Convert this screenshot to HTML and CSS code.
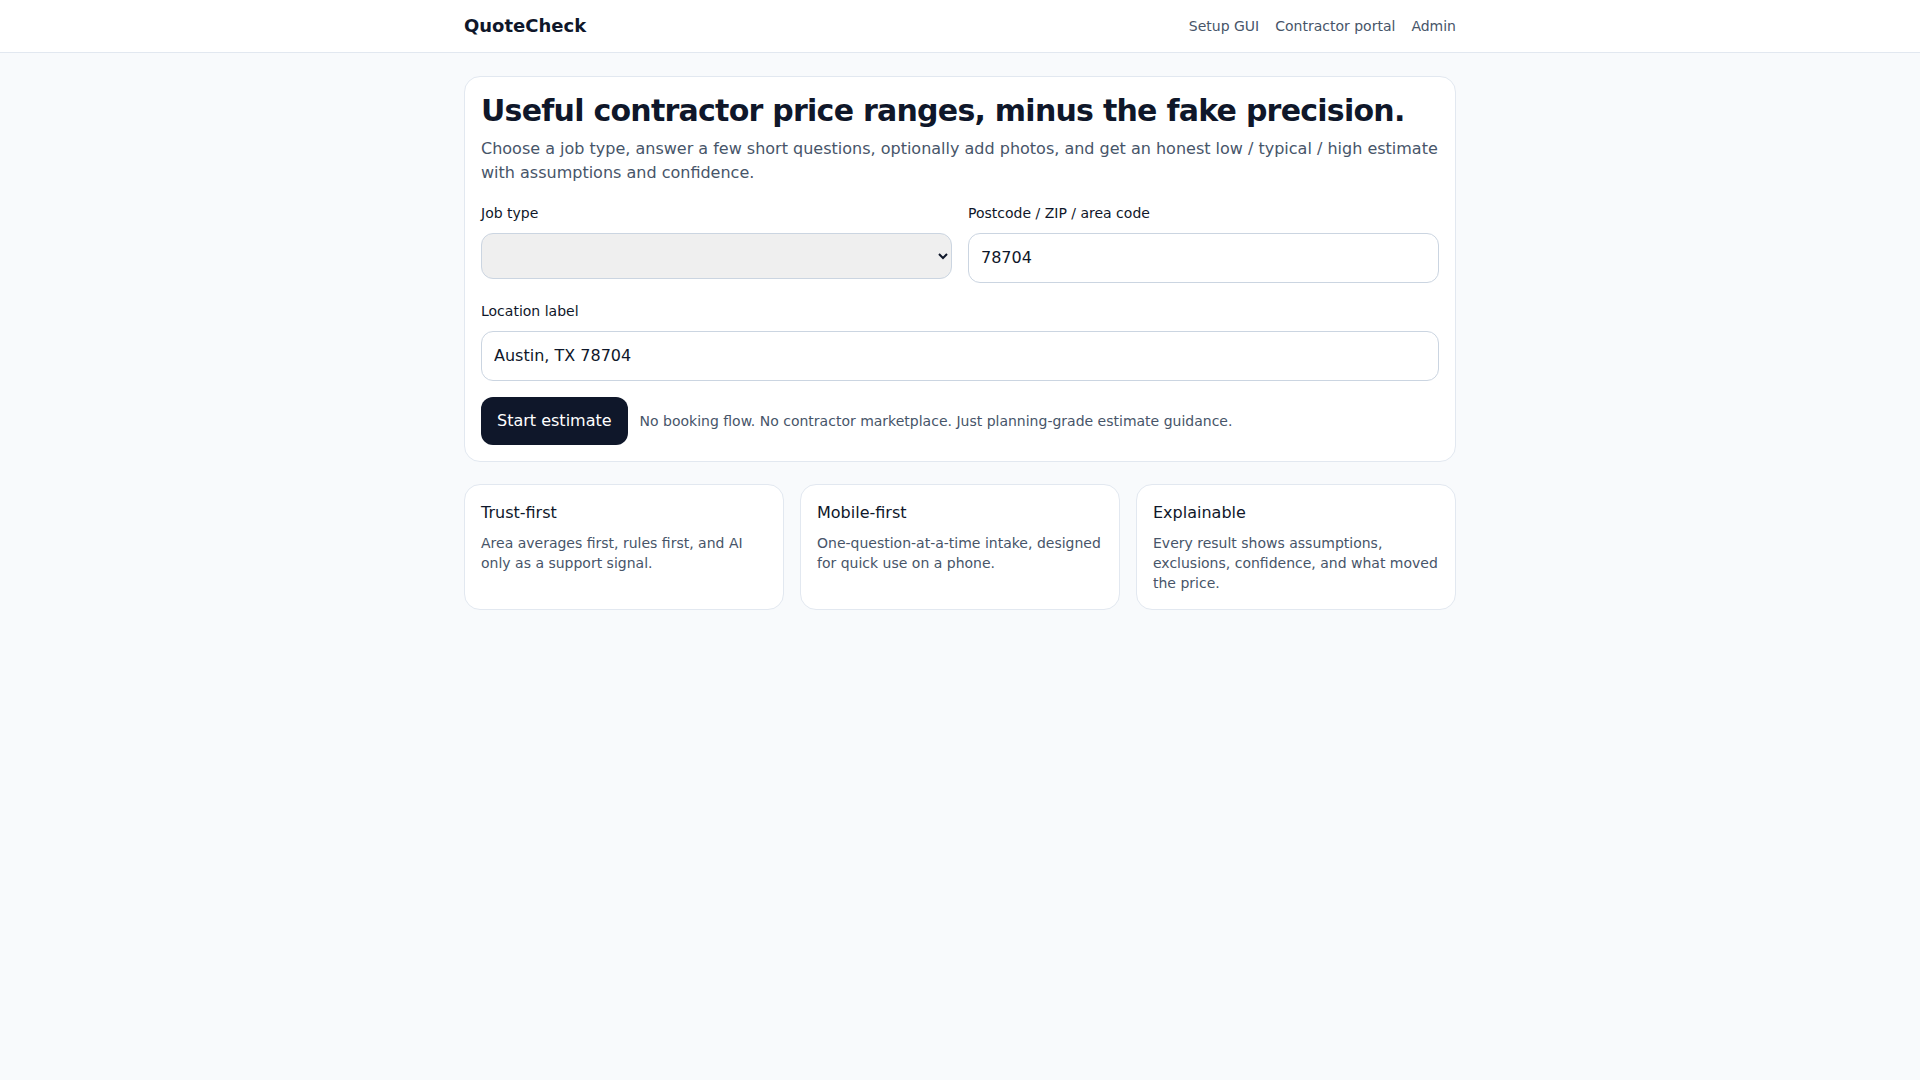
FILE: index.html
```html
<!DOCTYPE html>
<html lang="en">
	<head>
		<title>QuoteCheck</title>
		<meta charset="utf-8" />
		<link rel="stylesheet" href="styles.css">
	</head>

	<body>
		<!-- top bar -->
		<header class="topbar">
			<div class="topbar-inner">
				<a class="brand" href="#">QuoteCheck</a>
				<nav class="nav">
					<a href="#">Setup GUI</a>
					<a href="#">Contractor portal</a>
					<a href="#">Admin</a>
				</nav>
			</div>
		</header>

		<main class="page">
			<!-- intake card -->
			<section class="card intro">
				<h1>Useful contractor price ranges, minus the fake precision.</h1>
				<p class="lead">Choose a job type, answer a few short questions, optionally add photos, and get an honest low / typical / high estimate with assumptions and confidence.</p>

				<div class="form-grid">
					<label class="field">
						<span class="field-label">Job type</span>
						<select class="select"></select>
					</label>
					<label class="field">
						<span class="field-label">Postcode / ZIP / area code</span>
						<input class="input" type="text" value="78704" />
					</label>
				</div>

				<label class="field location">
					<span class="field-label">Location label</span>
					<input class="input" type="text" value="Austin, TX 78704" />
				</label>

				<div class="actions">
					<button class="btn">Start estimate</button>
					<span class="note">No booking flow. No contractor marketplace. Just planning-grade estimate guidance.</span>
				</div>
			</section>

			<!-- feature cards -->
			<div class="features">
				<div class="card feature">
					<h3>Trust-first</h3>
					<p>Area averages first, rules first, and AI only as a support signal.</p>
				</div>
				<div class="card feature">
					<h3>Mobile-first</h3>
					<p>One-question-at-a-time intake, designed for quick use on a phone.</p>
				</div>
				<div class="card feature">
					<h3>Explainable</h3>
					<p>Every result shows assumptions, exclusions, confidence, and what moved the price.</p>
				</div>
			</div>
		</main>
	</body>
</html>
```

FILE: styles.css
```css
/* base */
* {
	box-sizing: border-box;
}

body {
	margin: 0;
	background: #f8fafc;
	color: #0f172a;
	font-family: "DejaVu Sans", Verdana, sans-serif;
}

a {
	color: inherit;
	text-decoration: none;
}

/* top bar */
.topbar {
	background: #ffffff;
	border-bottom: 1px solid #e2e8f0;
}

.topbar-inner {
	max-width: 1024px;
	margin: 0 auto;
	padding: 12px 16px;
	display: flex;
	align-items: center;
	justify-content: space-between;
}

.brand {
	font-size: 18px;
	line-height: 28px;
	font-weight: 700;
}

.nav {
	display: flex;
	gap: 16px;
	font-size: 14px;
	color: #475569;
}

/* page */
.page {
	max-width: 1024px;
	margin: 0 auto;
	padding: 23px 16px 24px;
}

.card {
	background: #ffffff;
	border: 1px solid #e2e8f0;
	border-radius: 16px;
}

.intro {
	padding: 16px;
}

.intro h1 {
	margin: 0;
	font-size: 30px;
	line-height: 36px;
	font-weight: 700;
	letter-spacing: -0.75px;
}

.lead {
	margin: 8px 0 0;
	font-size: 16px;
	line-height: 24px;
	color: #475569;
}

/* form */
.form-grid {
	display: grid;
	grid-template-columns: 1fr 1fr;
	gap: 16px;
	margin-top: 18px;
	align-items: start;
}

.field {
	display: block;
}

.field-label {
	display: block;
	font-size: 14px;
	line-height: 20px;
	margin-bottom: 10px;
}

.location {
	margin-top: 18px;
}

.input,
.select {
	width: 100%;
	font-family: inherit;
	font-size: 16px;
	color: #0f172a;
	border: 1px solid #cbd5e1;
	border-radius: 12px;
	padding: 12px;
}

.input {
	line-height: 24px;
	background: #ffffff;
}

.select {
	height: 46px;
	background-color: #efefef;
}

.actions {
	display: flex;
	align-items: center;
	gap: 12px;
	margin-top: 16px;
}

.btn {
	font-family: inherit;
	font-size: 16px;
	line-height: 24px;
	color: #ffffff;
	background: #0f172a;
	border: none;
	border-radius: 12px;
	padding: 12px 16px;
}

.note {
	font-size: 14px;
	color: #475569;
}

/* feature cards */
.features {
	display: grid;
	grid-template-columns: 1fr 1fr 1fr;
	gap: 16px;
	margin-top: 22px;
}

.feature {
	padding: 16px;
}

.feature h3 {
	margin: 0;
	font-size: 16px;
	line-height: 24px;
	font-weight: 500;
}

.feature p {
	margin: 8px 0 0;
	font-size: 14px;
	line-height: 20px;
	color: #475569;
}
```
